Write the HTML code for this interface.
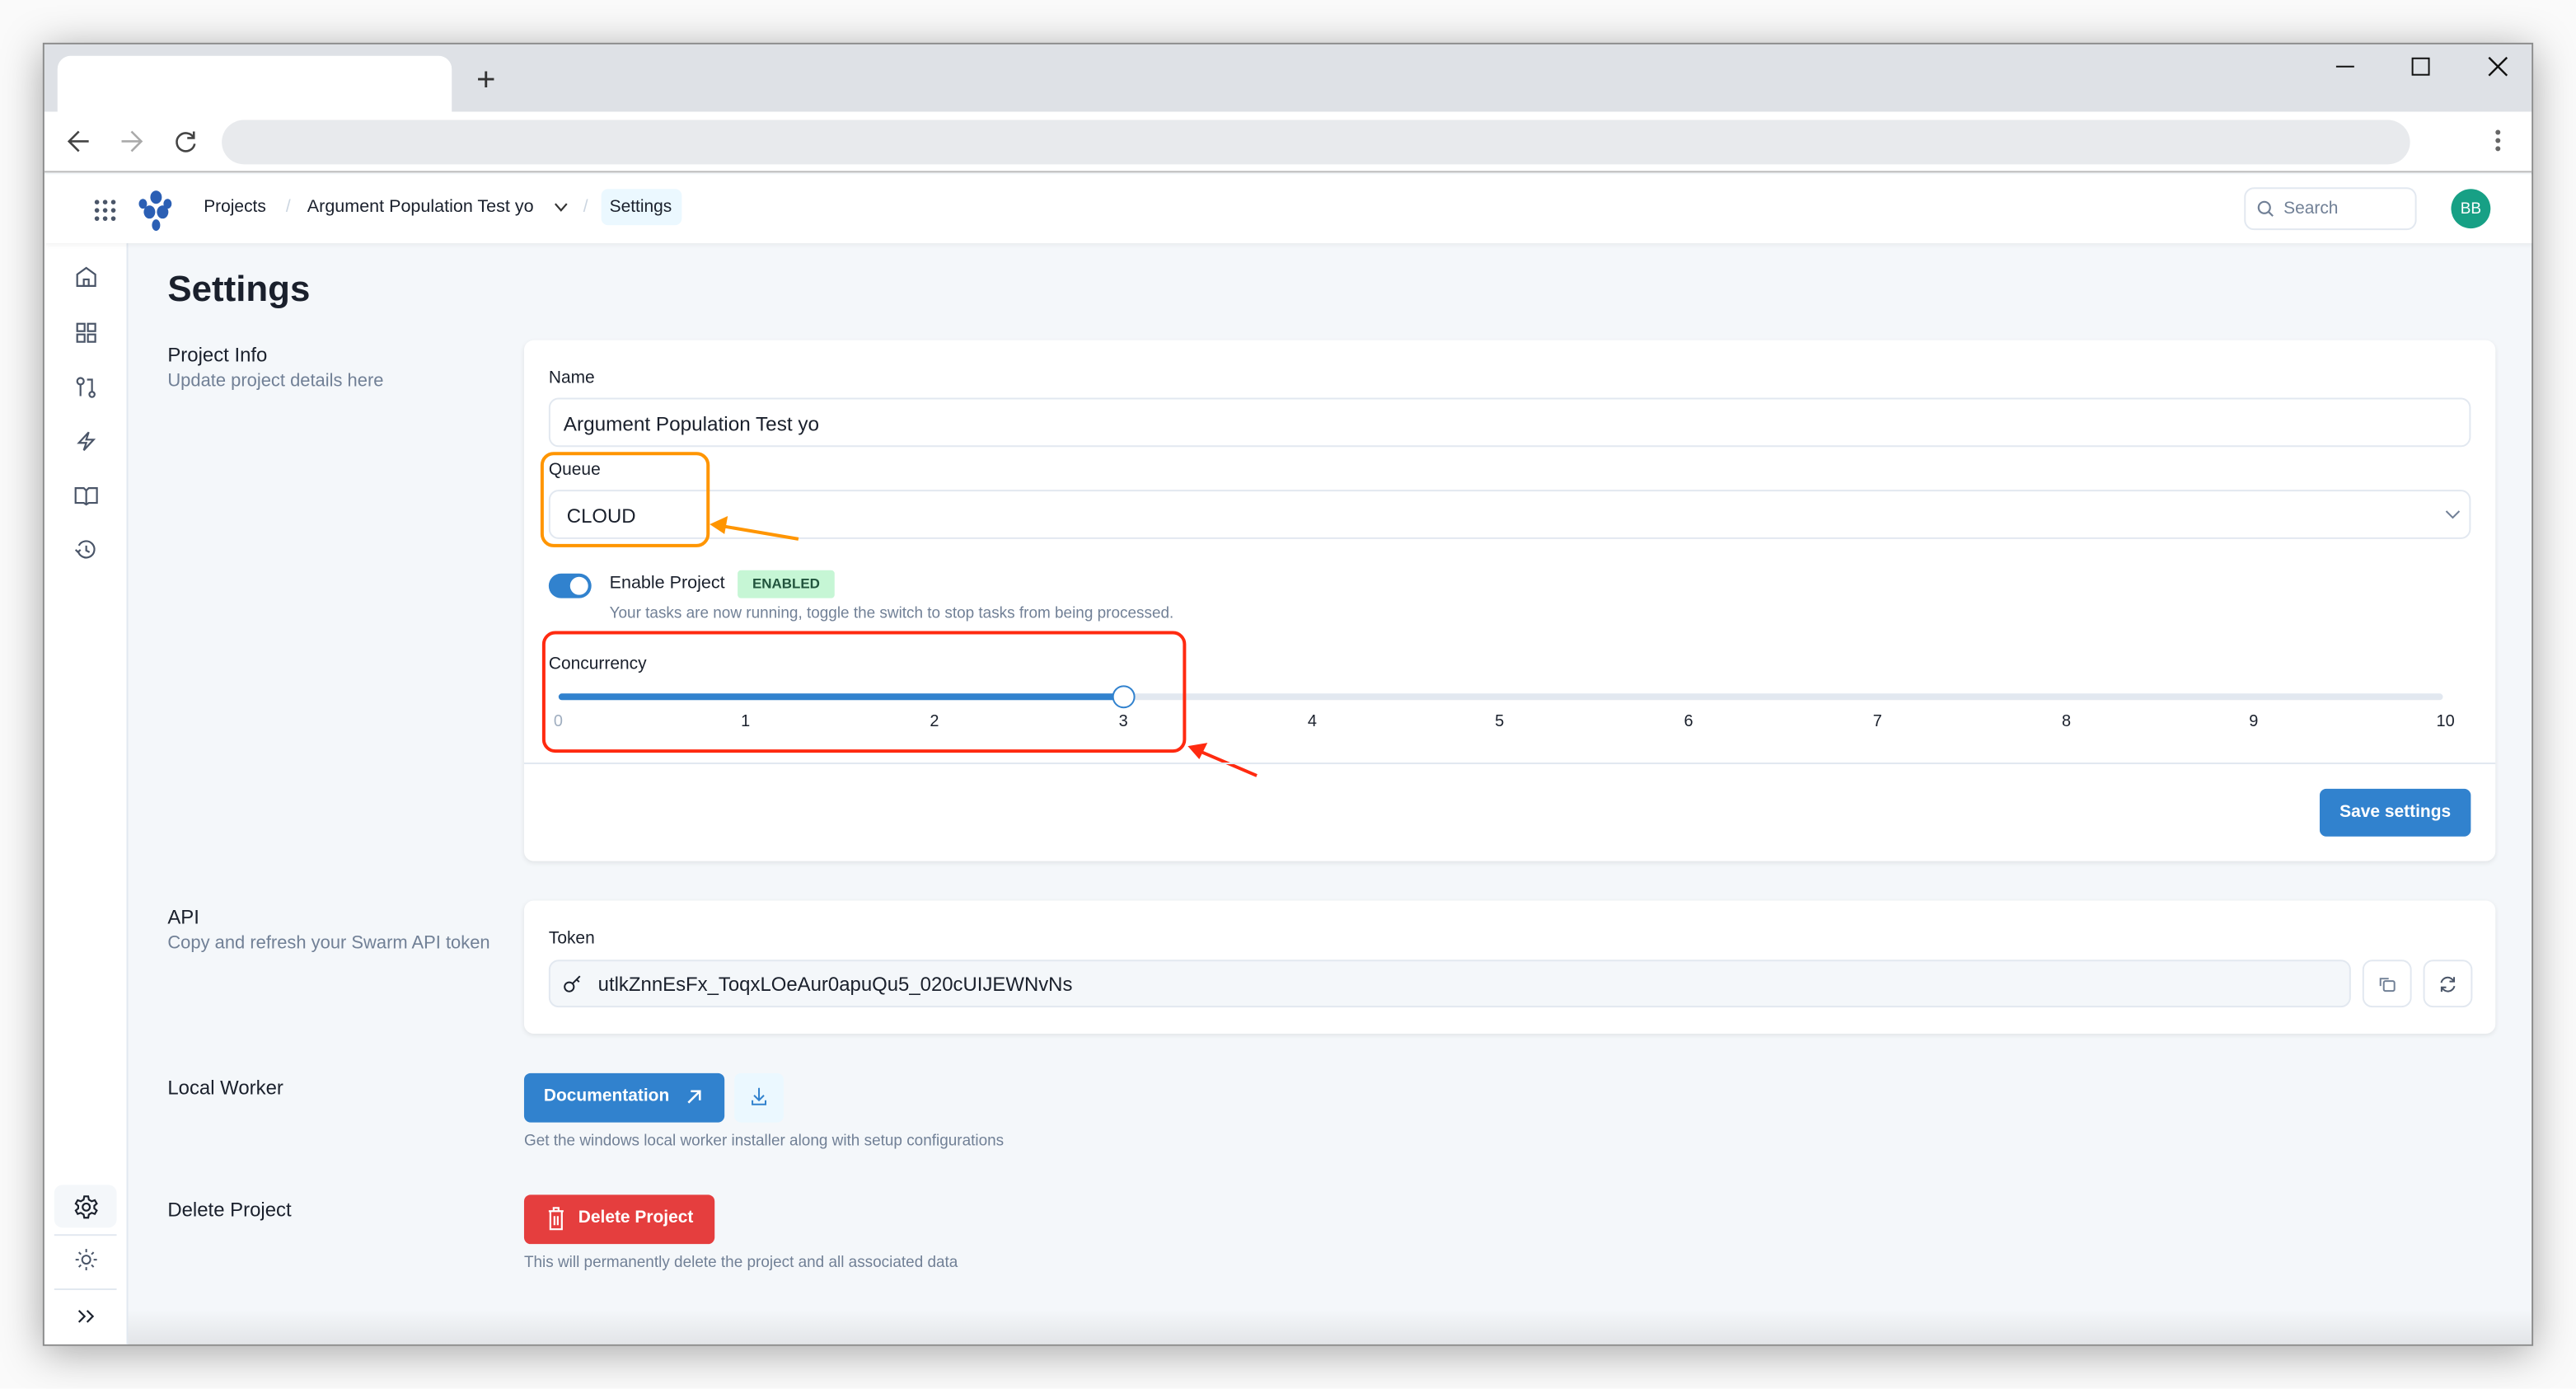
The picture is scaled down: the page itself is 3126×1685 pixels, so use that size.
<!DOCTYPE html>
<html><head><meta charset="utf-8"><style>
*{box-sizing:border-box;margin:0;padding:0}
html,body{width:3126px;height:1684px;overflow:hidden;background:#fff}
#s{position:absolute;left:0;top:0;width:1568px;height:845px;transform:scale(1.9936);transform-origin:0 0;font-family:"Liberation Sans",Arial,sans-serif;color:#1a202c;background:#fafafa}
.a{position:absolute}
.t{position:absolute;white-space:nowrap}
#win{left:26px;top:26px;width:1516px;height:793px;background:#f4f7fa;border:1px solid #8a8a8a;box-shadow:0 4px 24px rgba(0,0,0,.35);overflow:hidden}
.card{position:absolute;background:#fff;border-radius:6px;box-shadow:0 1px 3px rgba(0,0,0,.08)}
.inp{position:absolute;border:1px solid #e2e8f0;border-radius:6px;background:#fff}
.lbl{font-size:10.5px;color:#1a202c}
.sub{font-size:11px;color:#718096}
.h{font-size:12px;color:#1a202c}
.sm{font-size:9.5px;color:#718096}
svg{position:absolute;overflow:visible}
</style></head><body><div id="s">
<div id="win" class="a">
 <div class="a" style="left:0;top:0;width:1516px;height:41px;background:#dee1e6"></div>
 <div class="a" style="left:8px;top:7px;width:240px;height:36px;background:#fff;border-radius:8px 8px 0 0"></div>
 <div class="t" style="left:263px;top:11px;font-size:20px;color:#333">+</div>
 <div class="a" style="left:1395px;top:13px;width:11px;height:1.2px;background:#111"></div>
 <div class="a" style="left:1441px;top:8px;width:11px;height:11px;border:1.3px solid #111"></div>
 <svg style="left:1488px;top:8px" width="11" height="11"><path d="M0 0L11 11M11 0L0 11" stroke="#111" stroke-width="1.2"/></svg>
 <div class="a" style="left:0;top:41px;width:1516px;height:37px;background:#fff;border-bottom:1px solid #bbb"></div>
 <svg style="left:14px;top:52px" width="14" height="14"><path d="M13 7H1M7 1L1 7L7 13" stroke="#444" stroke-width="1.3" fill="none"/></svg>
 <svg style="left:46px;top:52px" width="14" height="14"><path d="M1 7H13M7 1L13 7L7 13" stroke="#aaa" stroke-width="1.3" fill="none"/></svg>
 <svg style="left:79px;top:52px" width="14" height="14"><path d="M12 5A5.5 5.5 0 1 0 12.5 8.5M12 1V5H8" stroke="#444" stroke-width="1.3" fill="none"/></svg>
 <div class="a" style="left:108px;top:46px;width:1332px;height:27px;background:#e8eaed;border-radius:14px"></div>
 <div class="a" style="left:1492px;top:52px;width:3px;height:3px;border-radius:2px;background:#666;box-shadow:0 5px 0 #666,0 10px 0 #666"></div>
 <div class="a" style="left:0;top:79px;width:1516px;height:42px;background:#fff;box-shadow:0 1px 3px rgba(0,0,0,.06);z-index:2"></div>
 <div style="z-index:3;position:absolute;left:0;top:0">
 <svg style="left:30px;top:94px" width="14" height="14"><g fill="#4a5568"><circle cx="2" cy="2" r="1.4"/><circle cx="7" cy="2" r="1.4"/><circle cx="12" cy="2" r="1.4"/><circle cx="2" cy="7" r="1.4"/><circle cx="7" cy="7" r="1.4"/><circle cx="12" cy="7" r="1.4"/><circle cx="2" cy="12" r="1.4"/><circle cx="7" cy="12" r="1.4"/><circle cx="12" cy="12" r="1.4"/></g></svg>
 <svg style="left:57px;top:89px" width="22" height="26"><g fill="#2b5fb4"><ellipse cx="11" cy="4" rx="3.5" ry="4"/><ellipse cx="3" cy="8" rx="2.5" ry="3"/><ellipse cx="18" cy="8" rx="2.5" ry="3"/><ellipse cx="7" cy="13" rx="3.5" ry="4"/><ellipse cx="15" cy="13" rx="3.5" ry="4"/><ellipse cx="11" cy="21" rx="2.5" ry="3.5"/></g></svg>
 <div class="t" style="left:97px;top:93px;font-size:10.5px">Projects</div>
 <div class="t" style="left:147px;top:93px;font-size:10.5px;color:#cbd5e0">/</div>
 <div class="t" style="left:160px;top:93px;font-size:10.8px">Argument Population Test yo</div>
 <svg style="left:311px;top:97px" width="7" height="5"><path d="M0 0L3.5 4L7 0" stroke="#333" stroke-width="1.1" fill="none"/></svg>
 <div class="t" style="left:328px;top:93px;font-size:10.5px;color:#cbd5e0">/</div>
 <div class="a" style="left:339px;top:88px;width:49px;height:22px;background:#ebf8ff;border-radius:4px"></div>
 <div class="t" style="left:344px;top:93px;font-size:10.5px">Settings</div>
 <div class="a" style="left:1339px;top:87px;width:105px;height:26px;border:1px solid #e2e8f0;border-radius:6px;background:#fff"></div>
 <svg style="left:1347px;top:95px" width="10" height="10"><circle cx="4.3" cy="4.3" r="3.5" stroke="#718096" stroke-width="1.1" fill="none"/><path d="M7 7L9.5 9.5" stroke="#718096" stroke-width="1.1"/></svg>
 <div class="t" style="left:1363px;top:94px;font-size:10.5px;color:#718096">Search</div>
 <div class="a" style="left:1465px;top:88px;width:24px;height:24px;border-radius:12px;background:#17a085"></div>
 <div class="t" style="left:1465px;top:95px;width:24px;text-align:center;font-size:9.5px;color:#fff">BB</div>
 </div>
 <div class="a" style="left:0;top:121px;width:51px;height:672px;background:#fff;border-right:1px solid #e2e8f0"></div>
 <svg style="left:19px;top:135px" width="13" height="13"><path d="M1 12V5L6.5 1L12 5V12ZM5 12V8H8V12" stroke="#4a5568" stroke-width="1.1" fill="none"/></svg>
 <svg style="left:19px;top:169px" width="13" height="13"><g stroke="#4a5568" stroke-width="1.1" fill="none"><rect x="1" y="1" width="4.5" height="4.5"/><rect x="7.5" y="1" width="4.5" height="4.5"/><rect x="1" y="7.5" width="4.5" height="4.5"/><rect x="7.5" y="7.5" width="4.5" height="4.5"/></g></svg>
 <svg style="left:19px;top:202px" width="13" height="13"><g stroke="#4a5568" stroke-width="1.1" fill="none"><circle cx="3" cy="3" r="2"/><path d="M3 5V12M7 2H10V9"/><circle cx="10" cy="11" r="1.6"/></g></svg>
 <svg style="left:19px;top:235px" width="13" height="13"><path d="M8 1L2 7.5H6.5L5 12L11 5.5H6.5Z" stroke="#4a5568" stroke-width="1.1" fill="none"/></svg>
 <svg style="left:18px;top:268px" width="15" height="13"><path d="M1 2H6L7.5 3.5L9 2H14V11H9L7.5 12L6 11H1ZM7.5 3.5V12" stroke="#4a5568" stroke-width="1.1" fill="none"/></svg>
 <svg style="left:19px;top:301px" width="13" height="13"><g stroke="#4a5568" stroke-width="1.1" fill="none"><path d="M2 4A5 5 0 1 1 1.5 7"/><path d="M0 6.5L1.5 8L3 6.5M6.5 4V7L8.5 8"/></g></svg>
 <div class="a" style="left:6px;top:694px;width:38px;height:26px;background:#f4f7fa;border-radius:5px"></div>
 <svg style="left:18px;top:700px" width="15" height="15"><g stroke="#1a202c" stroke-width="1.1" fill="none"><circle cx="7.5" cy="7.5" r="2.2"/><path d="M6.3 1H8.7L9.1 3L10.8 4L12.7 3.3L13.9 5.4L12.4 6.7V8.3L13.9 9.6L12.7 11.7L10.8 11L9.1 12L8.7 14H6.3L5.9 12L4.2 11L2.3 11.7L1.1 9.6L2.6 8.3V6.7L1.1 5.4L2.3 3.3L4.2 4L5.9 3Z"/></g></svg>
 <div class="a" style="left:6px;top:724px;width:38px;height:1px;background:#e2e8f0"></div>
 <svg style="left:19px;top:733px" width="13" height="13"><g stroke="#4a5568" stroke-width="1" fill="none"><circle cx="6.5" cy="6.5" r="2.5"/><path d="M6.5 0V2M6.5 11V13M0 6.5H2M11 6.5H13M2 2L3.3 3.3M9.7 9.7L11 11M2 11L3.3 9.7M9.7 3.3L11 2"/></g></svg>
 <div class="a" style="left:6px;top:757px;width:38px;height:1px;background:#e2e8f0"></div>
 <svg style="left:20px;top:770px" width="11" height="8"><path d="M1 0.5L4.5 4L1 7.5M6 0.5L9.5 4L6 7.5" stroke="#1a202c" stroke-width="1.1" fill="none"/></svg>
 <div class="t" style="left:75px;top:136px;font-size:22px;font-weight:bold">Settings</div>
 <div class="t h" style="left:75px;top:182px">Project Info</div>
 <div class="t sub" style="left:75px;top:199px">Update project details here</div>
 <div class="card" style="left:292px;top:180px;width:1200px;height:317px"></div>
 <div class="t lbl" style="left:307px;top:197px">Name</div>
 <div class="inp" style="left:307px;top:215px;width:1170px;height:30px"></div>
 <div class="t" style="left:316px;top:224px;font-size:12.2px">Argument Population Test yo</div>
 <div class="t lbl" style="left:307px;top:253px">Queue</div>
 <div class="inp" style="left:307px;top:271px;width:1170px;height:30px"></div>
 <div class="t" style="left:318px;top:280px;font-size:12px">CLOUD</div>
 <svg style="left:1462px;top:284px" width="8" height="5"><path d="M0 0L4 4L8 0" stroke="#718096" stroke-width="1" fill="none"/></svg>
 <div class="a" style="left:302px;top:248px;width:103px;height:58px;border:2px solid #ff9500;border-radius:8px"></div>
 <svg style="left:0;top:0" width="1" height="1"><path d="M459 301L412 293" stroke="#ff9500" stroke-width="2"/><path d="M405 292L416 287L414 298Z" fill="#ff9500"/></svg>
 <div class="a" style="left:307px;top:322px;width:26px;height:15px;border-radius:8px;background:#3182ce"></div>
 <div class="a" style="left:320px;top:324px;width:11px;height:11px;border-radius:6px;background:#fff"></div>
 <div class="t" style="left:344px;top:322px;font-size:10.8px">Enable Project</div>
 <div class="a" style="left:422px;top:320px;width:59px;height:17px;background:#c6f6d5;border-radius:2px"></div>
 <div class="t" style="left:422px;top:323px;width:59px;text-align:center;font-size:8.5px;font-weight:bold;color:#22543d">ENABLED</div>
 <div class="t sm" style="left:344px;top:341px">Your tasks are now running, toggle the switch to stop tasks from being processed.</div>
 <div class="t lbl" style="left:307px;top:371px">Concurrency</div>
 <div class="a" style="left:313px;top:395px;width:1147px;height:4px;border-radius:2px;background:#e2e8f0"></div>
 <div class="a" style="left:313px;top:395px;width:344px;height:4px;border-radius:2px;background:#3182ce"></div>
 <div class="a" style="left:650px;top:390px;width:14px;height:14px;border-radius:7px;background:#fff;border:1px solid #3182ce"></div>
 <div class="t" style="left:310px;top:407px;font-size:10px;color:#a0aec0">0</div>
 <div class="t" style="left:424px;top:407px;font-size:10px">1</div>
 <div class="t" style="left:539px;top:407px;font-size:10px">2</div>
 <div class="t" style="left:654px;top:407px;font-size:10px">3</div>
 <div class="t" style="left:769px;top:407px;font-size:10px">4</div>
 <div class="t" style="left:883px;top:407px;font-size:10px">5</div>
 <div class="t" style="left:998px;top:407px;font-size:10px">6</div>
 <div class="t" style="left:1113px;top:407px;font-size:10px">7</div>
 <div class="t" style="left:1228px;top:407px;font-size:10px">8</div>
 <div class="t" style="left:1342px;top:407px;font-size:10px">9</div>
 <div class="t" style="left:1456px;top:407px;font-size:10px">10</div>
 <div class="a" style="left:303px;top:357px;width:392px;height:74px;border:2px solid #ff2a10;border-radius:8px"></div>
 <svg style="left:0;top:0" width="1" height="1"><path d="M738 445L703 430" stroke="#ff2a10" stroke-width="2"/><path d="M696 427L708 425L703 435Z" fill="#ff2a10"/></svg>
 <div class="a" style="left:292px;top:437px;width:1200px;height:1px;background:#e2e8f0"></div>
 <div class="a" style="left:1385px;top:453px;width:92px;height:29px;background:#3182ce;border-radius:4px"></div>
 <div class="t" style="left:1385px;top:461px;width:92px;text-align:center;font-size:10.5px;font-weight:bold;color:#fff">Save settings</div>
 <div class="t h" style="left:75px;top:524px">API</div>
 <div class="t sub" style="left:75px;top:541px">Copy and refresh your Swarm API token</div>
 <div class="card" style="left:292px;top:521px;width:1200px;height:81px"></div>
 <div class="t lbl" style="left:307px;top:538px">Token</div>
 <div class="inp" style="left:307px;top:557px;width:1097px;height:29px;background:#f4f7fa"></div>
 <svg style="left:316px;top:566px" width="11" height="11"><g stroke="#1a202c" stroke-width="1" fill="none"><circle cx="3.5" cy="7.5" r="2.8"/><path d="M5.5 5.5L10 1M8 3L9.5 4.5"/></g></svg>
 <div class="t" style="left:337px;top:565px;font-size:12px">utlkZnnEsFx_ToqxLOeAur0apuQu5_020cUIJEWNvNs</div>
 <div class="inp" style="left:1411px;top:557px;width:30px;height:29px"></div>
 <svg style="left:1421px;top:567px" width="10" height="10"><g stroke="#718096" stroke-width="1" fill="none"><rect x="3" y="3" width="6.5" height="6" rx="1"/><path d="M1 6V1.5H6"/></g></svg>
 <div class="inp" style="left:1448px;top:557px;width:30px;height:29px"></div>
 <svg style="left:1458px;top:567px" width="10" height="10"><g stroke="#4a5568" stroke-width="1" fill="none"><path d="M1 4A4 4 0 0 1 8.5 3M9 6A4 4 0 0 1 1.5 7M8.8 0.5V3.2H6M1.2 9.5V6.8H4"/></g></svg>
 <div class="t h" style="left:75px;top:628px">Local Worker</div>
 <div class="a" style="left:292px;top:626px;width:122px;height:30px;background:#3182ce;border-radius:4px"></div>
 <div class="t" style="left:304px;top:634px;font-size:10.5px;font-weight:bold;color:#fff">Documentation</div>
 <svg style="left:391px;top:636px" width="9" height="9"><path d="M1 8L8 1M2.5 1H8V6.5" stroke="#fff" stroke-width="1.3" fill="none"/></svg>
 <div class="a" style="left:420px;top:626px;width:30px;height:30px;background:#ebf8ff;border-radius:4px"></div>
 <svg style="left:430px;top:635px" width="10" height="11"><path d="M5 0V7M2 4.5L5 7.5L8 4.5M1 7.5V10H9V7.5" stroke="#3182ce" stroke-width="1" fill="none"/></svg>
 <div class="t sm" style="left:292px;top:662px">Get the windows local worker installer along with setup configurations</div>
 <div class="t h" style="left:75px;top:702px">Delete Project</div>
 <div class="a" style="left:292px;top:700px;width:116px;height:30px;background:#e53e3e;border-radius:4px"></div>
 <svg style="left:306px;top:707px" width="11" height="15"><g stroke="#fff" stroke-width="1.1" fill="none"><path d="M1 3H10M4 3V1H7V3M2 3V14H9V3M4.5 6V11.5M6.5 6V11.5"/></g></svg>
 <div class="t" style="left:325px;top:708px;font-size:10.5px;font-weight:bold;color:#fff">Delete Project</div>
 <div class="t sm" style="left:292px;top:736px">This will permanently delete the project and all associated data</div>
 <div class="a" style="left:51px;top:770px;width:1465px;height:23px;background:linear-gradient(to bottom,rgba(230,233,237,0),rgba(225,227,230,1))"></div>
</div>
</div></body></html>
